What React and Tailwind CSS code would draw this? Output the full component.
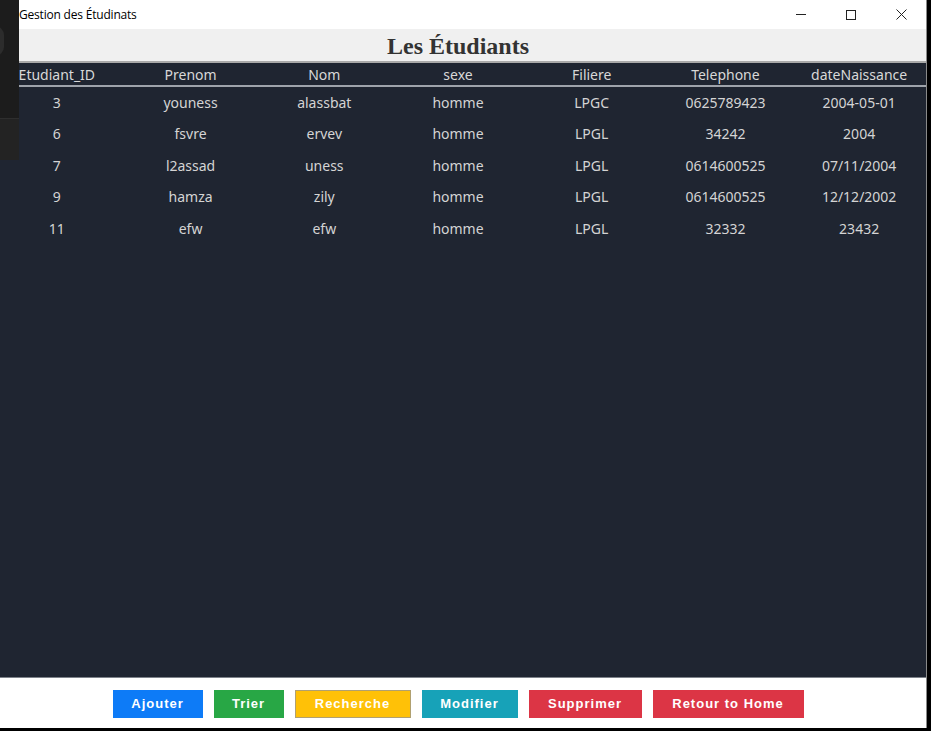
import React from "react";

const columns = ["Etudiant_ID", "Prenom", "Nom", "sexe", "Filiere", "Telephone", "dateNaissance"];

const etudiants = [
    ["3", "youness", "alassbat", "homme", "LPGC", "0625789423", "2004-05-01"],
    ["6", "fsvre", "ervev", "homme", "LPGL", "34242", "2004"],
    ["7", "l2assad", "uness", "homme", "LPGL", "0614600525", "07/11/2004"],
    ["9", "hamza", "zily", "homme", "LPGL", "0614600525", "12/12/2002"],
    ["11", "efw", "efw", "homme", "LPGL", "32332", "23432"],
];

const boutons = [
    { label: "Ajouter", cls: "w-[90px] bg-[#0d7bf7]" },
    { label: "Trier", cls: "w-[70px] bg-[#28a745]" },
    { label: "Recherche", cls: "w-[116px] bg-[#ffc107] border border-[#b0a070]" },
    { label: "Modifier", cls: "w-[96px] bg-[#17a2b8]" },
    { label: "Supprimer", cls: "w-[113px] bg-[#dc3545]" },
    { label: "Retour to Home", cls: "w-[151px] bg-[#dc3545]" },
];

function App() {
    return (
        <div className="relative w-[931px] h-[731px] overflow-hidden bg-black font-['Noto_Sans',sans-serif]">
            <div className="ml-[-10px] w-[937px] h-[728px] flex flex-col border-r border-[#8a8a8a]">
                {/* barre de titre */}
                <div className="h-[29px] bg-white flex items-center shrink-0">
                    <span className="pl-[29px] text-[12px] text-black font-['Open_Sans',sans-serif] tracking-[-0.2px]">
                        Gestion des Étudinats
                    </span>
                    <div className="ml-auto flex h-full">
                        <div className="w-[50px] flex items-center justify-center">
                            <div className="w-[10px] h-px bg-[#222]"></div>
                        </div>
                        <div className="w-[50px] flex items-center justify-center">
                            <div className="w-[10px] h-[10px] border border-[#222]"></div>
                        </div>
                        <div className="w-[50px] flex items-center justify-center">
                            <svg width="11" height="11" viewBox="0 0 11 11">
                                <path d="M0.5 0.5 L10.5 10.5 M10.5 0.5 L0.5 10.5" stroke="#222" strokeWidth="1" />
                            </svg>
                        </div>
                    </div>
                </div>

                {/* entete */}
                <div className="h-[34px] bg-[#f0f0f0] border-b-2 border-[#a9a9a9] flex items-center justify-center shrink-0">
                    <h1 className="text-[24px] font-bold text-[#333] font-['Liberation_Serif',serif] leading-none pt-[1px]">
                        Les Étudiants
                    </h1>
                </div>

                {/* tableau */}
                <div className="flex-1 bg-[#1f2531] border-b border-[#7d828a]">
                    <div className="grid grid-cols-7 h-[24px] pt-[1px] border-b-2 border-[#9ea3ab] items-center text-[14px] text-[#d8d8d8]">
                        {columns.map((c) => (
                            <div key={c} className="text-center leading-none">{c}</div>
                        ))}
                    </div>
                    {etudiants.map((row, i) => (
                        <div key={i} className="grid grid-cols-7 h-[31.5px] items-center text-[14px] text-[#d4d4d4]">
                            {row.map((cell, j) => (
                                <div key={j} className="text-center leading-none">{cell}</div>
                            ))}
                        </div>
                    ))}
                </div>

                {/* boutons */}
                <div className="h-[50px] pt-[2px] bg-white flex items-center justify-center gap-[11px] shrink-0">
                    {boutons.map((b) => (
                        <button
                            key={b.label}
                            type="button"
                            className={`h-[28px] ${b.cls} text-white text-[13px] font-bold tracking-[1px] font-['Liberation_Sans',sans-serif]`}
                        >
                            {b.label}
                        </button>
                    ))}
                </div>
            </div>

            {/* fenetre voisine en haut a gauche */}
            <div className="absolute left-0 top-0 w-[19px] h-[160px] flex flex-col">
                <div className="relative h-[118px] bg-[#1c1c1c] overflow-hidden">
                    <div className="absolute left-[-14px] top-[26px] w-[18px] h-[30px] rounded-full bg-[#2c2c2c]"></div>
                </div>
                <div className="flex-1 bg-[#232323] border-t border-[#2e2e2e]"></div>
            </div>
        </div>
    );
}

export default App;
